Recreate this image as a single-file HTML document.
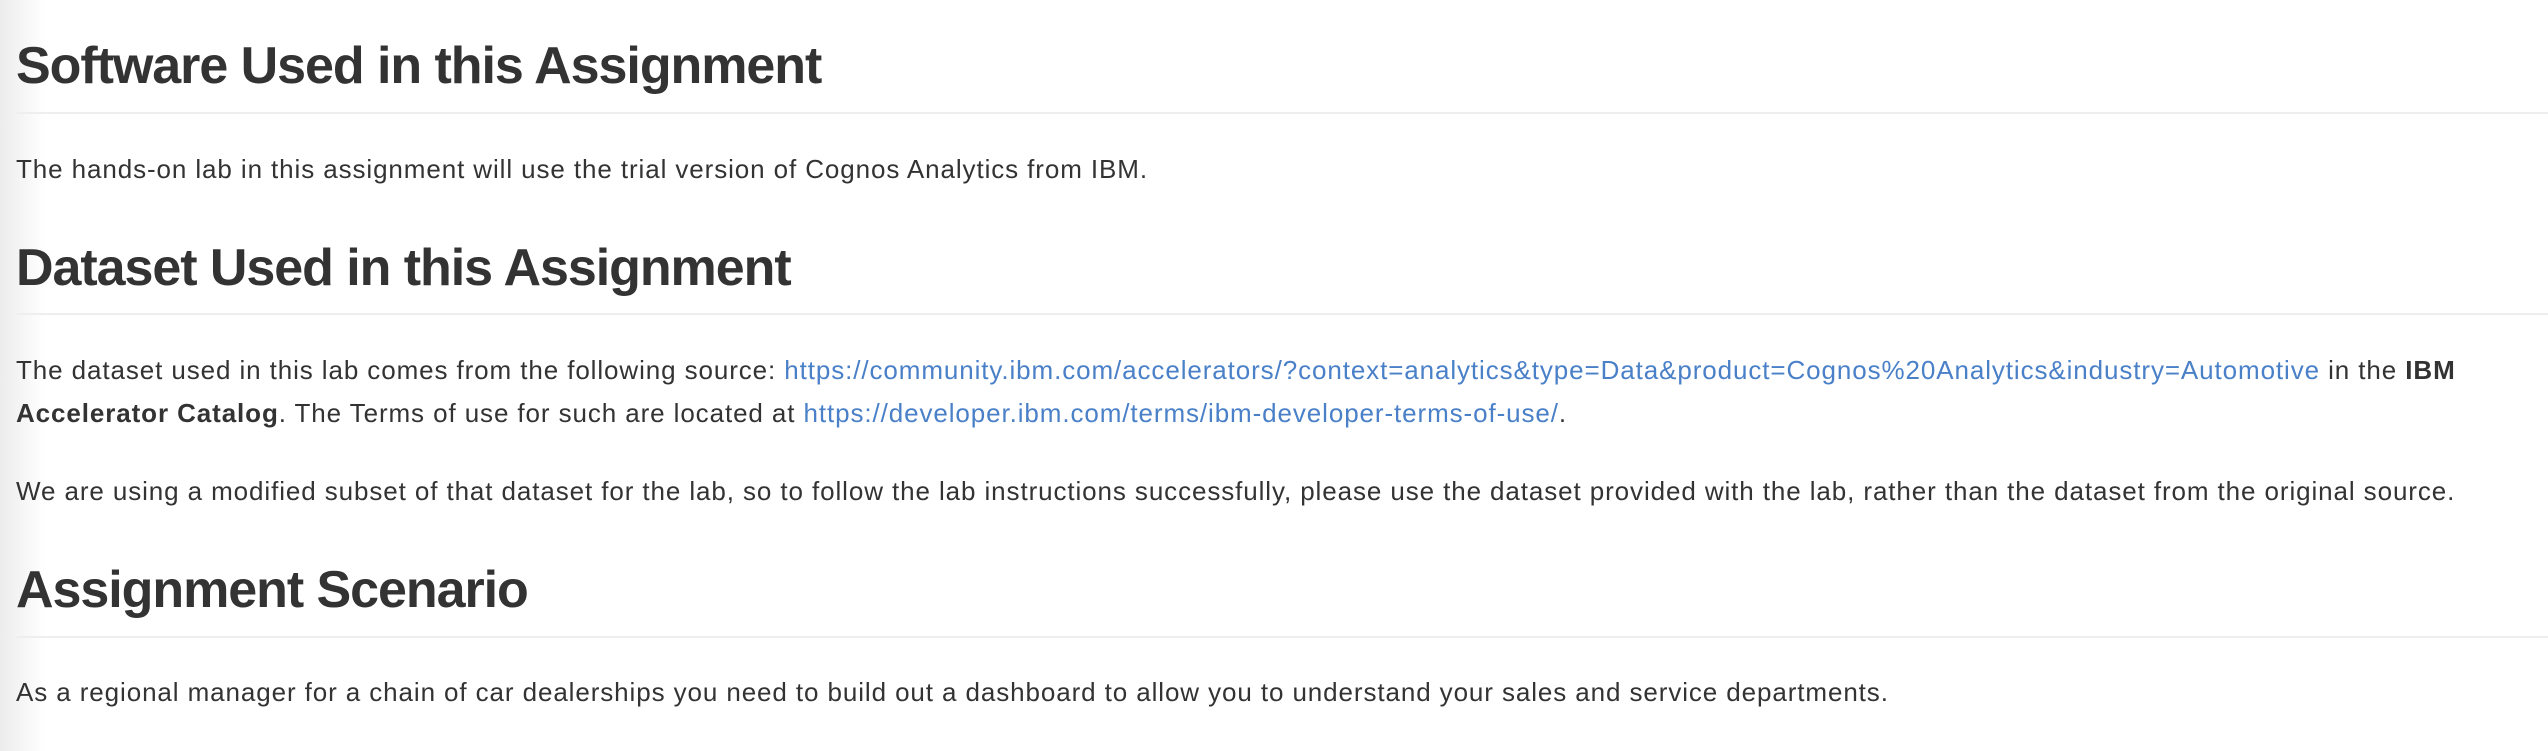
<!DOCTYPE html>
<html><head><meta charset="utf-8"><style>
html,body{margin:0;padding:0;width:2548px;height:751px;overflow:hidden;background:#fff;}
body{position:relative;font-family:"Liberation Sans",Arial,sans-serif;color:#333;}
.shade{position:absolute;left:0;top:0;width:45px;height:751px;background:linear-gradient(to right,#ececec,#fff);}
.h{position:absolute;left:16px;font-size:52px;font-weight:bold;line-height:52px;white-space:nowrap;letter-spacing:-1.05px;}
.p{position:absolute;left:16px;font-size:26px;line-height:43px;white-space:nowrap;letter-spacing:0.9px;}
.r{position:absolute;left:16px;right:0;height:2px;background:#eeeeee;}
a{color:#4a80c8;text-decoration:none;}
b{font-weight:bold;}
</style></head><body>
<div class="shade"></div>
<div class="h" style="top:40px">Software Used in this Assignment</div>
<div class="r" style="top:112px"></div>
<div class="p" style="top:148px">The hands-on lab in this assignment will use the trial version of Cognos Analytics from IBM.</div>
<div class="h" style="top:242px">Dataset Used in this Assignment</div>
<div class="r" style="top:313px"></div>
<div class="p" style="top:349px">The dataset used in this lab comes from the following source: <a>https://community.ibm.com/accelerators/?context=analytics&amp;type=Data&amp;product=Cognos%20Analytics&amp;industry=Automotive</a> in the <b>IBM</b><br><b>Accelerator Catalog</b>. The Terms of use for such are located at <a>https://developer.ibm.com/terms/ibm-developer-terms-of-use/</a>.</div>
<div class="p" style="top:470px">We are using a modified subset of that dataset for the lab, so to follow the lab instructions successfully, please use the dataset provided with the lab, rather than the dataset from the original source.</div>
<div class="h" style="top:564px">Assignment Scenario</div>
<div class="r" style="top:636px"></div>
<div class="p" style="top:671px">As a regional manager for a chain of car dealerships you need to build out a dashboard to allow you to understand your sales and service departments.</div>
</body></html>
